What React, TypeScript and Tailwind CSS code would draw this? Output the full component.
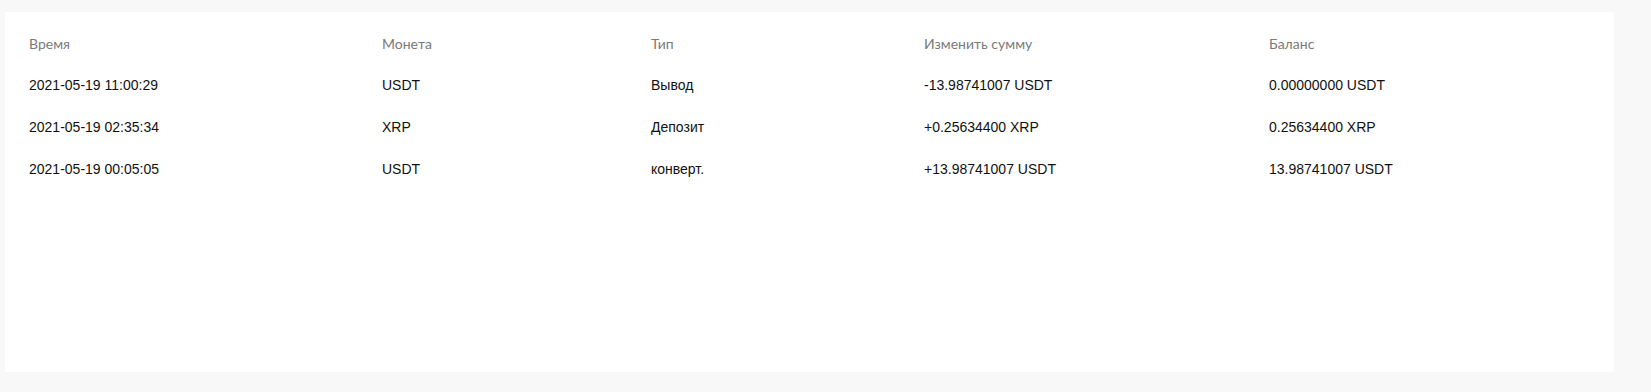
const rows = [
  ["2021-05-19 11:00:29", "USDT", "Вывод", "-13.98741007 USDT", "0.00000000 USDT"],
  ["2021-05-19 02:35:34", "XRP", "Депозит", "+0.25634400 XRP", "0.25634400 XRP"],
  ["2021-05-19 00:05:05", "USDT", "конверт.", "+13.98741007 USDT", "13.98741007 USDT"],
];

const heads = ["Время", "Монета", "Тип", "Изменить сумму", "Баланс"];

export default function App() {
  return (
    <div className="w-[1651px] h-[392px] bg-[#f8f8f8] pt-[12px] pl-[5px]">
      <div className="w-[1609px] h-[360px] bg-white pt-[10px] px-6 font-['Liberation_Sans',Arial,sans-serif] text-[14px]">
        <div className="grid grid-cols-[353px_269px_273px_345px_1fr] h-[42px] items-center text-[#7a7a7a] font-['Lato','Liberation_Sans',sans-serif]">
          {heads.map((h) => (
            <div key={h}>{h}</div>
          ))}
        </div>
        {rows.map((r, i) => (
          <div
            key={i}
            className="grid grid-cols-[353px_269px_273px_345px_1fr] h-[42px] items-center text-[#111]"
          >
            {r.map((c, j) => (
              <div key={j}>{c}</div>
            ))}
          </div>
        ))}
      </div>
    </div>
  );
}
